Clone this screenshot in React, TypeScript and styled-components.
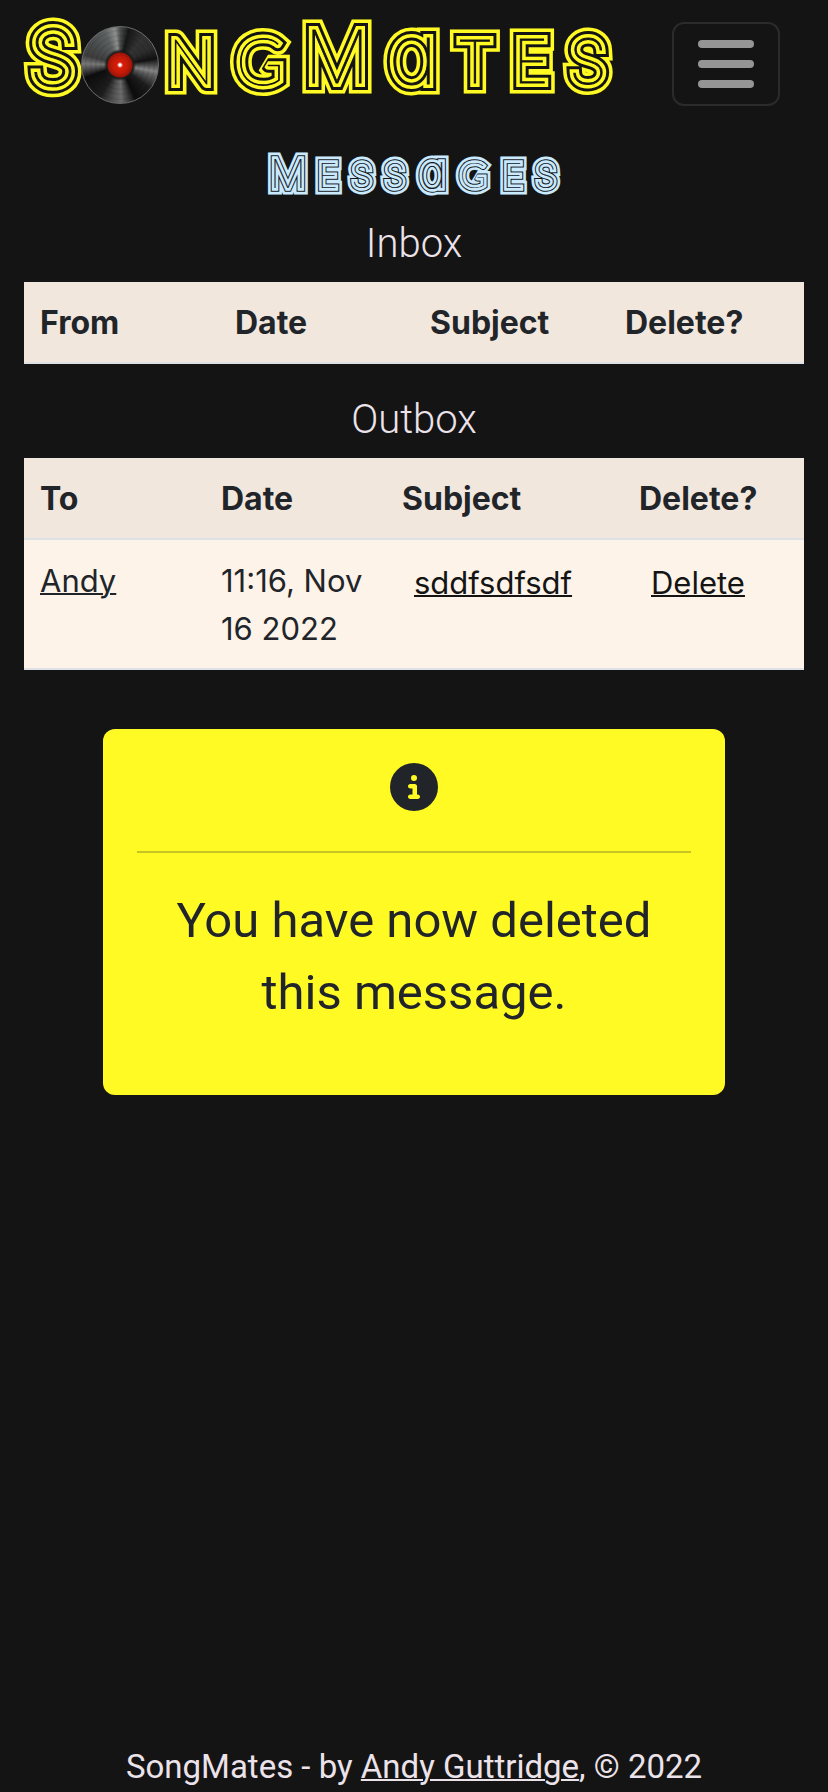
import React from "react";
import styled, { createGlobalStyle } from "styled-components";
import { FaCircleInfo } from "react-icons/fa6";

const colors = {
  page: "#141414",
  yellow: "#fff924",
  blue: "#c9e9ff",
  light: "#ece3ea",
  ink: "#212529",
  link: "#141414",
  head: "#f1e7dd",
  row: "#fdf3e9",
  rule: "#dee2e6",
};

const GlobalStyle = createGlobalStyle`
  *, *::before, *::after { box-sizing: border-box; }
  body {
    margin: 0;
    background: ${colors.page};
    color: ${colors.light};
    font-family: Inter, "Liberation Sans", sans-serif;
    font-size: 32px;
    line-height: 48px;
  }
`;

const Page = styled.div`
  min-height: 100vh;
  display: flex;
  flex-direction: column;
`;

const Header = styled.header`
  display: flex;
  align-items: center;
  justify-content: space-between;
  height: 128px;
  padding: 0 48px 0 24px;
`;

const HomeLink = styled.a`
  display: block;
  height: 128px;
`;

const MenuButton = styled.button`
  display: flex;
  flex-direction: column;
  align-items: center;
  justify-content: center;
  gap: 12px;
  width: 108px;
  height: 84px;
  padding: 0;
  border: 2px solid #2b2b2b;
  border-radius: 12px;
  background: transparent;
`;

const MenuBar = styled.span`
  width: 56px;
  height: 8px;
  border-radius: 4px;
  background: #959595;
`;

const Main = styled.main`
  flex: 1;
  display: flex;
  flex-direction: column;
  padding: 0 24px;
`;

const Title = styled.h1`
  display: flex;
  justify-content: center;
  margin: 16px 0 20px;
  line-height: 0;
`;

const BoxTitle = styled.h2`
  margin: 0 0 12px;
  text-align: center;
  font-family: Roboto, sans-serif;
  font-size: 40px;
  font-weight: 300;
  line-height: 52px;
`;

const MessageTable = styled.table`
  width: 100%;
  margin-bottom: 30px;
  table-layout: fixed;
  border-collapse: collapse;
  color: ${colors.ink};
  font-size: 31px;
`;

const HeadCell = styled.th<{ $width?: string }>`
  width: ${(p) => p.$width ?? "auto"};
  padding: 17px 16px;
  text-align: left;
  font-size: 32px;
  font-weight: 700;
  background: ${colors.head};
  box-shadow: inset 0 -2px ${colors.rule};
`;

const Cell = styled.td`
  padding: 17px 16px;
  vertical-align: top;
  background: ${colors.row};
  box-shadow: inset 0 -2px ${colors.rule};
`;

const TextLink = styled.a`
  color: inherit;
  text-decoration: underline;
  text-decoration-thickness: 2px;
`;

const ActionLink = styled(TextLink)`
  display: block;
  padding: 2px 12px 0;
  color: ${colors.link};
`;

const Notice = styled.section`
  align-self: center;
  width: 622px;
  max-width: 100%;
  margin-top: 29px;
  padding: 34px;
  border-radius: 12px;
  background: ${colors.yellow};
  color: ${colors.ink};
  text-align: center;
`;

const NoticeIcon = styled(FaCircleInfo)`
  display: block;
  width: 48px;
  height: 48px;
  margin: 0 auto;
`;

const NoticeRule = styled.hr`
  height: 2px;
  margin: 40px 0 32px;
  border: 0;
  background: ${colors.ink};
  opacity: 0.25;
`;

const NoticeText = styled.p`
  margin: 0 0 32px;
  font-family: Roboto, sans-serif;
  font-size: 49px;
  line-height: 72px;
`;

const Footer = styled.footer`
  padding-bottom: 1px;
  text-align: center;
  font-family: Roboto, sans-serif;
  font-size: 33px;
`;

const Lettering = styled.svg`
  display: block;
  overflow: visible;
  font-family: Inter, sans-serif;
  font-weight: 100;
  font-feature-settings: "cv11";
  stroke-linejoin: miter;
  stroke-miterlimit: 1.5;
`;

const Disc = styled.div`
  width: 78px;
  height: 78px;
  border-radius: 50%;
  border: 1px solid #6c6c6c;
  background:
    radial-gradient(circle, #fff 0 1px, #d81d08 3px, #c21a08 8px, #9c1406 12px, #1a1a1a 13px, transparent 16px),
    repeating-radial-gradient(circle, transparent 0 3px, rgba(0, 0, 0, 0.08) 4px 5px),
    conic-gradient(#4d4f4f 0deg, #161616 14deg, #333 40deg, #2c2c2c 62deg, #111 80deg,
      #848484 100deg, #5c5c5c 108deg, #1c1c1c 128deg, #0c0c0c 155deg, #6c6c6c 178deg,
      #555 190deg, #1d1d1d 212deg, #0d0d0d 250deg, #777 272deg, #3c3c3c 286deg,
      #4a4d4d 310deg, #5c6060 335deg, #8d8d8d 352deg, #4d4f4f 360deg);
`;

type Glyph = { char: string; x: number; size: number; base: number; family?: string };

/** Striped lettering: one text, stroked in alternating colours from wide to narrow. */
function Striped({
  id, width, height, glyphs, color, widths, children,
}: {
  id: string; width: number; height: number; glyphs: Glyph[]; color: string; widths: number[];
  children?: React.ReactNode;
}) {
  return (
    <Lettering width={width} height={height} viewBox={`0 0 ${width} ${height}`}>
      <defs>
        <text id={id}>
          {glyphs.map((g, i) => (
            <tspan key={i} x={g.x} y={g.base} fontSize={g.size} fontFamily={g.family} textAnchor="middle">
              {g.char}
            </tspan>
          ))}
        </text>
      </defs>
      {widths.map((w, i) => {
        const c = i % 2 ? colors.page : color;
        return <use key={w} href={`#${id}`} fill={c} stroke={c} strokeWidth={w} />;
      })}
      {children}
    </Lettering>
  );
}

const round = "Lato";

const logoGlyphs: Glyph[] = [
  { char: "S", x: 29, size: 79, base: 86 },
  { char: "N", x: 167, size: 61, base: 84, family: round },
  { char: "G", x: 236, size: 65, base: 85, family: round },
  { char: "M", x: 313, size: 72, base: 83 },
  { char: "a", x: 389, size: 84, base: 84 },
  { char: "T", x: 451, size: 59, base: 83 },
  { char: "E", x: 507, size: 60, base: 83 },
  { char: "S", x: 564, size: 62, base: 84 },
];

const titleGlyphs: Glyph[] = [
  { char: "M", x: 22, size: 40, base: 44 },
  { char: "E", x: 62, size: 34, base: 44 },
  { char: "S", x: 96, size: 34, base: 44 },
  { char: "S", x: 129, size: 34, base: 44 },
  { char: "a", x: 167, size: 47, base: 44 },
  { char: "G", x: 207, size: 36, base: 44, family: round },
  { char: "E", x: 247, size: 34, base: 44 },
  { char: "S", x: 280, size: 34, base: 44 },
];

export default function App() {
  return (
    <Page>
      <GlobalStyle />
      <Header>
        <HomeLink href="#home" aria-label="SongMates">
          <Striped id="logo" width={594} height={128} glyphs={logoGlyphs} color={colors.yellow} widths={[21, 14, 8, 1]}>
            <foreignObject x={57} y={26} width={78} height={78}>
              <Disc />
            </foreignObject>
          </Striped>
        </HomeLink>
        <MenuButton type="button" aria-label="Toggle navigation">
          <MenuBar /><MenuBar /><MenuBar />
        </MenuButton>
      </Header>
      <Main>
        <Title aria-label="Messages">
          <Striped id="title" width={296} height={54} glyphs={titleGlyphs} color={colors.blue} widths={[13, 7.6, 5.6, 0.2]} />
        </Title>
        <BoxTitle>Inbox</BoxTitle>
        <MessageTable>
          <thead>
            <tr>
              <HeadCell>From</HeadCell>
              <HeadCell>Date</HeadCell>
              <HeadCell>Subject</HeadCell>
              <HeadCell>Delete?</HeadCell>
            </tr>
          </thead>
        </MessageTable>
        <BoxTitle>Outbox</BoxTitle>
        <MessageTable>
          <thead>
            <tr>
              <HeadCell>To</HeadCell>
              <HeadCell>Date</HeadCell>
              <HeadCell $width="237px">Subject</HeadCell>
              <HeadCell>Delete?</HeadCell>
            </tr>
          </thead>
          <tbody>
            <tr>
              <Cell><TextLink href="#andy">Andy</TextLink></Cell>
              <Cell>11:16, Nov 16 2022</Cell>
              <Cell><ActionLink href="#message">sddfsdfsdf</ActionLink></Cell>
              <Cell><ActionLink href="#delete">Delete</ActionLink></Cell>
            </tr>
          </tbody>
        </MessageTable>
        <Notice role="status">
          <NoticeIcon aria-hidden />
          <NoticeRule />
          <NoticeText>You have now deleted this message.</NoticeText>
        </Notice>
      </Main>
      <Footer>
        SongMates - by <TextLink href="#author">Andy Guttridge</TextLink>, © 2022
      </Footer>
    </Page>
  );
}
